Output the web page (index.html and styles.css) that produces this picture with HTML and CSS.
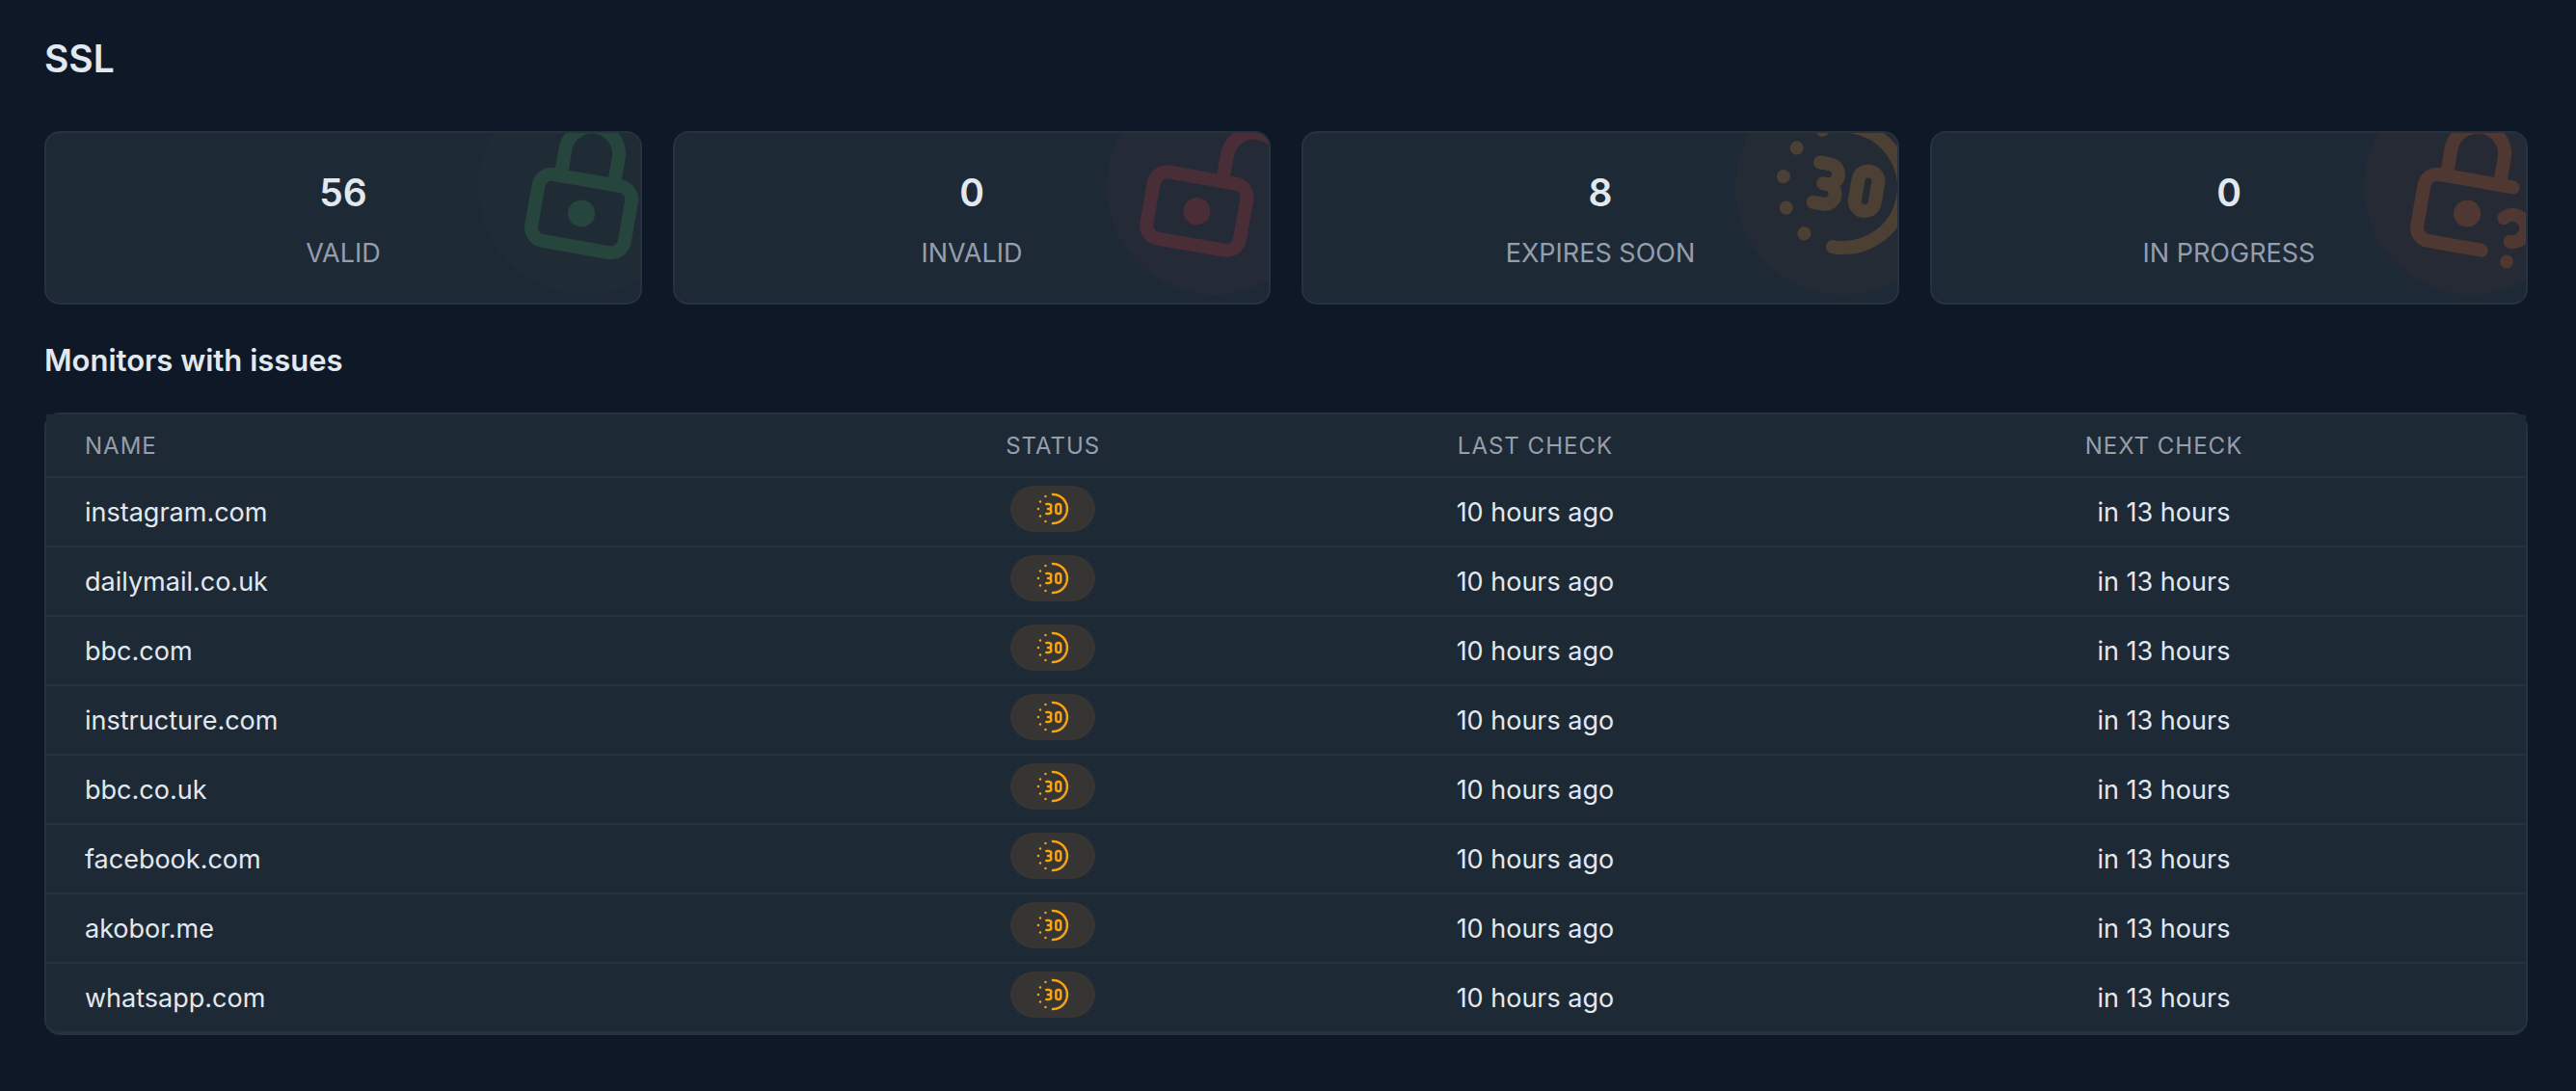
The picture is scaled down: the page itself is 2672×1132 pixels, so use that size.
FILE: index.html
```html
<!DOCTYPE html>
<html lang="en">
<head>
<meta charset="utf-8">
<meta name="viewport" content="width=device-width, initial-scale=1">
<title>SSL</title>
<link rel="stylesheet" href="styles.css">
</head>
<body>
<svg class="sprite" aria-hidden="true">
  <symbol id="icon-lock" viewBox="0 0 24 24">
    <rect x="5" y="11" width="14" height="10" rx="2"/>
    <circle cx="12" cy="16" r="1"/>
    <path d="M8 11V7a4 4 0 0 1 8 0v4"/>
  </symbol>
  <symbol id="icon-lock-open" viewBox="0 0 24 24">
    <rect x="3" y="11" width="14" height="10" rx="2"/>
    <circle cx="10" cy="16" r="1"/>
    <path d="M13 11V7a4 4 0 1 1 8 0v4"/>
  </symbol>
  <symbol id="icon-thirty" viewBox="0 0 24 24">
    <path d="M8 9h1.5a1.5 1.5 0 0 1 0 3H9h.5a1.5 1.5 0 0 1 0 3H8M14 10.5v3a1.5 1.5 0 0 0 3 0v-3a1.5 1.5 0 0 0-3 0zM3 12v.01M7.5 19.8v.01M4.2 16.5v.01M4.2 7.5v.01M7.5 4.2v.01M12 21a9 9 0 0 0 0-18"/>
  </symbol>
  <symbol id="icon-lock-question" viewBox="0 0 24 24">
    <path d="M15 21H7a2 2 0 0 1-2-2v-6a2 2 0 0 1 2-2h11"/>
    <circle cx="12" cy="16" r="1"/>
    <path d="M8 11V7a4 4 0 1 1 8 0v4M19 22v.01M19 19a2.003 2.003 0 0 0 .914-3.782 1.98 1.98 0 0 0-2.414.483"/>
  </symbol>
</svg>
<main class="page">
  <h1 class="title">SSL</h1>
  <section class="stats" aria-label="Certificate summary">
    <div class="card">
      <div class="blob blob-valid"><svg class="blob-icon"><use href="#icon-lock"/></svg></div>
      <p class="count">56</p>
      <p class="label">VALID</p>
    </div>
    <div class="card">
      <div class="blob blob-invalid"><svg class="blob-icon"><use href="#icon-lock-open"/></svg></div>
      <p class="count">0</p>
      <p class="label">INVALID</p>
    </div>
    <div class="card">
      <div class="blob blob-expiring"><svg class="blob-icon"><use href="#icon-thirty"/></svg></div>
      <p class="count">8</p>
      <p class="label">EXPIRES SOON</p>
    </div>
    <div class="card">
      <div class="blob blob-progress"><svg class="blob-icon"><use href="#icon-lock-question"/></svg></div>
      <p class="count">0</p>
      <p class="label">IN PROGRESS</p>
    </div>
  </section>
  <h2 class="subtitle">Monitors with issues</h2>
  <div class="panel">
    <table class="monitors">
      <colgroup><col class="col-name"><col class="col-status"><col class="col-last"><col class="col-next"></colgroup>
      <thead>
        <tr><th scope="col">NAME</th><th scope="col">STATUS</th><th scope="col">LAST CHECK</th><th scope="col">NEXT CHECK</th></tr>
      </thead>
      <tbody>
        <tr><td>instagram.com</td><td class="status"><span class="pill"><svg class="pill-icon"><use href="#icon-thirty"/></svg></span></td><td>10 hours ago</td><td>in 13 hours</td></tr>
        <tr><td>dailymail.co.uk</td><td class="status"><span class="pill"><svg class="pill-icon"><use href="#icon-thirty"/></svg></span></td><td>10 hours ago</td><td>in 13 hours</td></tr>
        <tr><td>bbc.com</td><td class="status"><span class="pill"><svg class="pill-icon"><use href="#icon-thirty"/></svg></span></td><td>10 hours ago</td><td>in 13 hours</td></tr>
        <tr><td>instructure.com</td><td class="status"><span class="pill"><svg class="pill-icon"><use href="#icon-thirty"/></svg></span></td><td>10 hours ago</td><td>in 13 hours</td></tr>
        <tr><td>bbc.co.uk</td><td class="status"><span class="pill"><svg class="pill-icon"><use href="#icon-thirty"/></svg></span></td><td>10 hours ago</td><td>in 13 hours</td></tr>
        <tr><td>facebook.com</td><td class="status"><span class="pill"><svg class="pill-icon"><use href="#icon-thirty"/></svg></span></td><td>10 hours ago</td><td>in 13 hours</td></tr>
        <tr><td>akobor.me</td><td class="status"><span class="pill"><svg class="pill-icon"><use href="#icon-thirty"/></svg></span></td><td>10 hours ago</td><td>in 13 hours</td></tr>
        <tr><td>whatsapp.com</td><td class="status"><span class="pill"><svg class="pill-icon"><use href="#icon-thirty"/></svg></span></td><td>10 hours ago</td><td>in 13 hours</td></tr>
      </tbody>
    </table>
  </div>
</main>
</body>
</html>
```
FILE: styles.css
```css
:root {
  --bg: #0e1826;
  --surface: #1e2936;
  --line: #26323f;
  --text: #e2e8f0;
  --muted: #949eac;
}

* { box-sizing: border-box; }

body {
  margin: 0;
  background: var(--bg);
  color: var(--text);
  font-family: Inter, "Liberation Sans", sans-serif;
  font-size: 27px;
  line-height: 40px;
}

h1, h2, p { margin: 0; }

.sprite { display: none; }

.page { padding: 36px 50px 48px 46px; }

.title {
  margin-bottom: 50px;
  font-size: 39px;
  font-weight: 600;
  line-height: 50px;
}

.stats {
  display: grid;
  grid-template-columns: repeat(4, 1fr);
  gap: 32px;
}

.card {
  position: relative;
  display: flex;
  flex-direction: column;
  gap: 15px;
  padding: 34px 32px 31px;
  overflow: hidden;
  border: 2px solid var(--line);
  border-radius: 16px;
  background: var(--surface);
  text-align: center;
}

.count {
  font-size: 39px;
  font-weight: 600;
  line-height: 56px;
}

.label { color: var(--muted); }

/* Tinted disc that bleeds off the top right corner of a card */
.blob {
  position: absolute;
  top: -56px;
  right: -56px;
  display: flex;
  align-items: center;
  justify-content: center;
  width: 224px;
  height: 224px;
  border-radius: 50%;
}

.blob-icon {
  flex: none;
  width: 168px;
  height: 168px;
  transform: rotate(10deg);
}

.blob-icon, .pill-icon {
  fill: none;
  stroke: currentColor;
  stroke-width: 2;
  stroke-linecap: round;
  stroke-linejoin: round;
}

.blob-valid { background: #1f2c36; color: #25453d; }
.blob-invalid { background: #242a36; color: #4a2e37; }
.blob-expiring { background: #252b35; color: #4c4035; }
.blob-progress { background: #252a35; color: #503832; }

.subtitle {
  margin: 38px 0 34px;
  font-size: 31px;
  font-weight: 600;
  line-height: 40px;
}

.panel {
  border: 2px solid var(--line);
  border-radius: 16px;
  background: var(--surface);
}

.monitors {
  width: 100%;
  table-layout: fixed;
  border-collapse: separate;
  border-spacing: 0;
  text-align: center;
}

.col-name { width: 31.9%; }
.col-status { width: 17.4%; }
.col-last { width: 21.5%; }
.col-next { width: 29.2%; }

.monitors th {
  padding: 13px 0 11px;
  border-bottom: 2px solid var(--line);
  background: var(--surface);
  color: var(--muted);
  font-size: 24px;
  font-weight: 400;
  letter-spacing: 1px;
}

.monitors td {
  padding: 16px 0 14px;
  border-bottom: 2px solid var(--line);
}

.monitors th:first-child, .monitors td:first-child {
  padding-left: 40px;
  text-align: left;
}

.monitors tr:last-child td:first-child { border-bottom-left-radius: 14px; }
.monitors tr:last-child td:last-child { border-bottom-right-radius: 14px; }

.monitors .status {
  padding: 8px 0 14px;
  line-height: 0;
}

.pill {
  display: inline-flex;
  padding: 4px 24px;
  border-radius: 24px;
  background: #363534;
  color: #f5a213;
}

.pill-icon {
  width: 40px;
  height: 40px;
  stroke-width: 1.5;
}
```
